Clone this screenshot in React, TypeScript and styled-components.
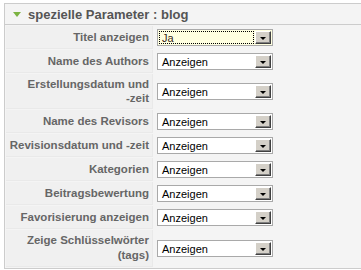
import React from "react";
import styled, { createGlobalStyle } from "styled-components";

const Global = createGlobalStyle`
  html, body { margin: 0; padding: 0; background: #fff; overflow: hidden; }
  body { font-family: "Liberation Sans", Arial, sans-serif; }
`;

const Page = styled.div`
  width: 361px;
  height: 270px;
  padding: 3px 0 0 4px;
  box-sizing: border-box;
  overflow: hidden;
`;

const Panel = styled.div`
  width: 372px;
  border: 1px solid #cccccc;
  background: #f4f4f4;
`;

const Header = styled.div`
  display: flex;
  align-items: center;
  height: 20px;
  padding-left: 8px;
  gap: 7px;
  border-bottom: 1px solid #cccccc;
  font-size: 13px;
  font-weight: bold;
  color: #555;
`;

const Triangle = styled.span`
  width: 0;
  height: 0;
  border-left: 4px solid transparent;
  border-right: 4px solid transparent;
  border-top: 5px solid #7cb342;
`;

const Table = styled.div`
  display: flex;
  flex-direction: column;
  gap: 1px;
  padding: 1px;
`;

const Row = styled.div`
  display: flex;
  gap: 1px;
`;

const Key = styled.div<{ $tall?: boolean }>`
  width: 140px;
  flex: none;
  padding: 3px;
  background: #f0f0f0;
  border-bottom: 1px solid #e9e9e9;
  border-right: 1px solid #e9e9e9;
  text-align: right;
  font-size: 11.5px;
  line-height: ${(p) => (p.$tall ? "15px" : "14px")};
  font-weight: bold;
  color: #666;
  display: flex;
  align-items: center;
  justify-content: flex-end;
`;

const Value = styled.div`
  flex: 1;
  padding: 3px;
  display: flex;
  align-items: center;
`;

const Select = styled.div<{ $focused?: boolean }>`
  width: 116px;
  height: 17px;
  box-sizing: border-box;
  border: 1px solid #a9a9a9;
  background: ${(p) => (p.$focused ? "#ffffe0" : "#fff")};
  display: flex;
  align-items: stretch;
  padding: 1px;
  font-size: 11px;
  color: #000;
`;

const SelectText = styled.div<{ $focused?: boolean }>`
  flex: 1;
  display: flex;
  align-items: center;
  padding-left: 2px;
  margin-right: 1px;
  border: 1px ${(p) => (p.$focused ? "dotted #000" : "solid transparent")};
  color: ${(p) => (p.$focused ? "#3a2a1a" : "#000")};
`;

const ArrowBtn = styled.div`
  width: 16px;
  box-sizing: border-box;
  background: #d4d0c8;
  border-top: 1px solid #fff;
  border-left: 1px solid #fff;
  border-right: 1px solid #404040;
  border-bottom: 1px solid #404040;
  box-shadow: inset -1px -1px 0 #808080;
  display: flex;
  align-items: center;
  justify-content: center;
`;

const ArrowGlyph = styled.span`
  width: 0;
  height: 0;
  border-left: 3px solid transparent;
  border-right: 3px solid transparent;
  border-top: 3px solid #000;
  margin-top: 1px;
`;

const rows: { label: string; value: string; focused?: boolean; tall?: boolean }[] = [
  { label: "Titel anzeigen", value: "Ja", focused: true },
  { label: "Name des Authors", value: "Anzeigen" },
  { label: "Erstellungsdatum und -\u2060zeit", value: "Anzeigen" },
  { label: "Name des Revisors", value: "Anzeigen" },
  { label: "Revisionsdatum und -\u2060zeit", value: "Anzeigen" },
  { label: "Kategorien", value: "Anzeigen" },
  { label: "Beitragsbewertung", value: "Anzeigen" },
  { label: "Favorisierung anzeigen", value: "Anzeigen" },
  { label: "Zeige Schlüsselwörter (tags)", value: "Anzeigen", tall: true },
];

export default function App() {
  return (
    <Page>
      <Global />
      <Panel>
        <Header>
          <Triangle />
          <span>spezielle Parameter : blog</span>
        </Header>
        <Table>
          {rows.map((r) => (
            <Row key={r.label}>
              <Key $tall={r.tall}>{r.label}</Key>
              <Value>
                <Select $focused={r.focused}>
                  <SelectText $focused={r.focused}>{r.value}</SelectText>
                  <ArrowBtn>
                    <ArrowGlyph />
                  </ArrowBtn>
                </Select>
              </Value>
            </Row>
          ))}
        </Table>
      </Panel>
    </Page>
  );
}
